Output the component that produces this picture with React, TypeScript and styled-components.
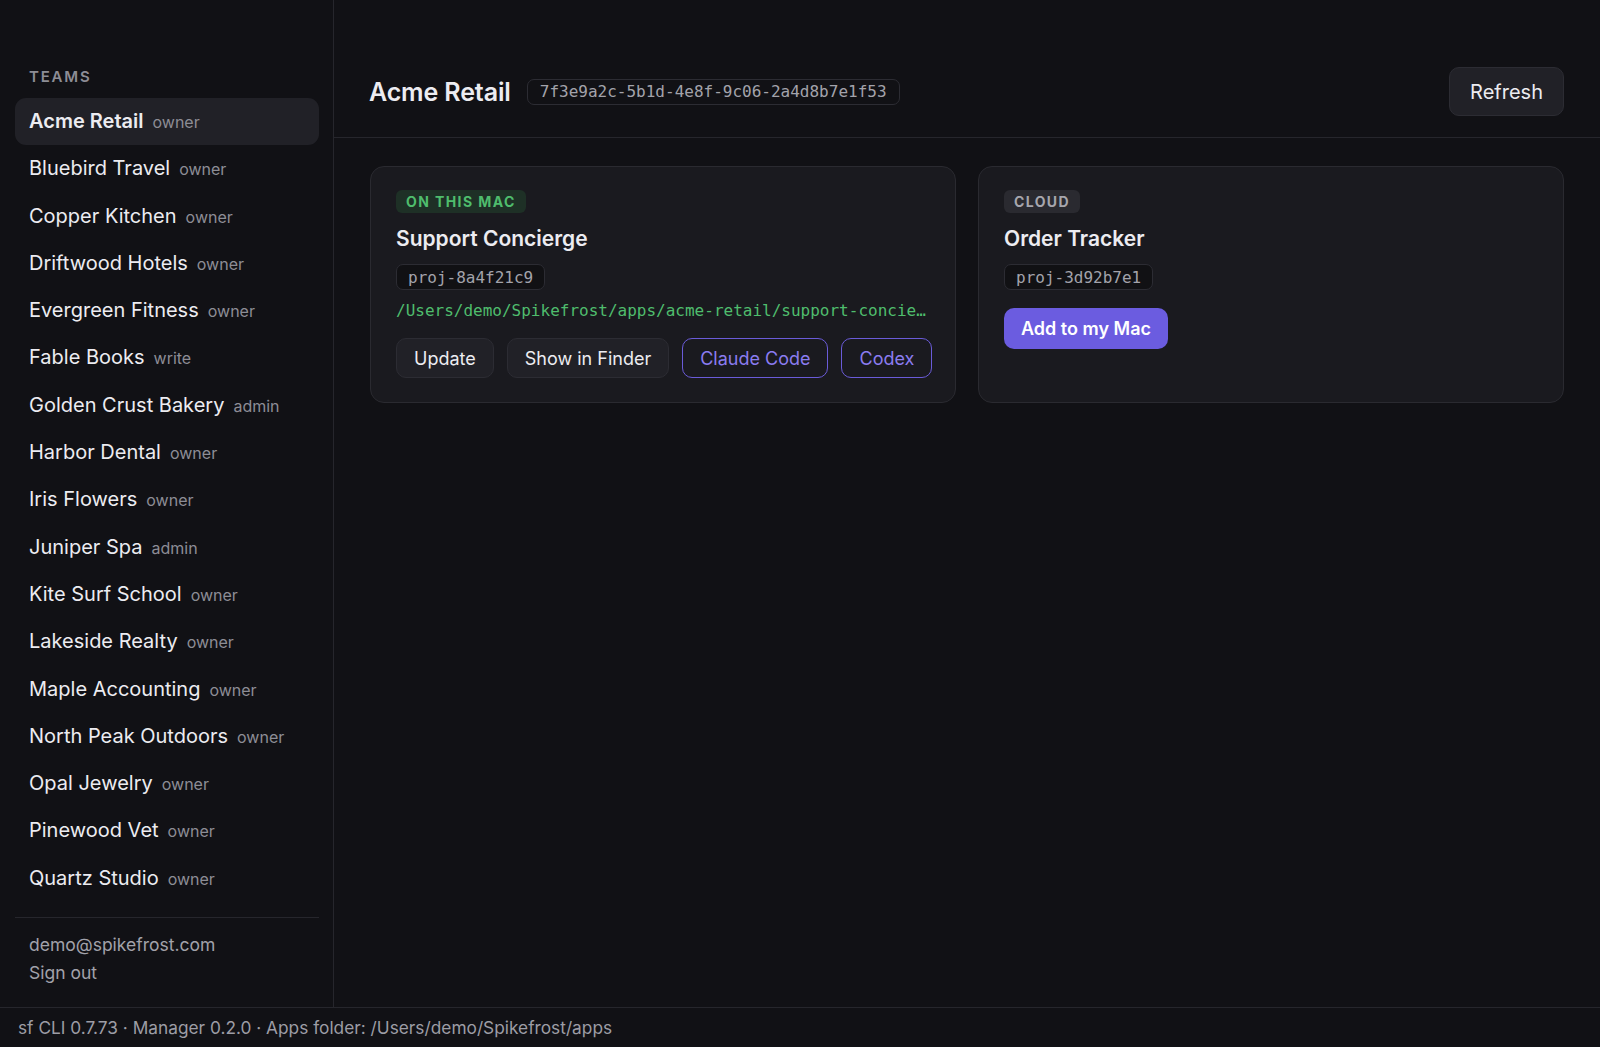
import React from 'react'
import styled, { createGlobalStyle, css } from 'styled-components'

const bg = '#111115'
const line = '#26262c'
const text = '#ececf1'
const muted = '#8d8d95'
const purple = '#6b5ce0'
const green = '#4fbd6d'
const mono = `'DejaVu Sans Mono', 'Liberation Mono', monospace`

const GlobalStyle = createGlobalStyle`
  html, body, #root {
    height: 100%;
    margin: 0;
  }
  body {
    background: ${bg};
    color: ${text};
    font-family: Inter, 'Noto Sans', sans-serif;
    -webkit-font-smoothing: antialiased;
  }
  * {
    box-sizing: border-box;
  }
`

type Team = { name: string; role: string }

const teams: Team[] = [
  { name: 'Acme Retail', role: 'owner' },
  { name: 'Bluebird Travel', role: 'owner' },
  { name: 'Copper Kitchen', role: 'owner' },
  { name: 'Driftwood Hotels', role: 'owner' },
  { name: 'Evergreen Fitness', role: 'owner' },
  { name: 'Fable Books', role: 'write' },
  { name: 'Golden Crust Bakery', role: 'admin' },
  { name: 'Harbor Dental', role: 'owner' },
  { name: 'Iris Flowers', role: 'owner' },
  { name: 'Juniper Spa', role: 'admin' },
  { name: 'Kite Surf School', role: 'owner' },
  { name: 'Lakeside Realty', role: 'owner' },
  { name: 'Maple Accounting', role: 'owner' },
  { name: 'North Peak Outdoors', role: 'owner' },
  { name: 'Opal Jewelry', role: 'owner' },
  { name: 'Pinewood Vet', role: 'owner' },
  { name: 'Quartz Studio', role: 'owner' },
  { name: 'Riverside Cycles', role: 'owner' },
]

export default function App() {
  return (
    <>
      <GlobalStyle />
      <Shell>
        <Body>
          <Sidebar>
            <SectionLabel>Teams</SectionLabel>
            <TeamList>
              {teams.map((t, i) => (
                <TeamItem key={t.name} $active={i === 0}>
                  <TeamName $active={i === 0}>{t.name}</TeamName>
                  <Role>{t.role}</Role>
                </TeamItem>
              ))}
            </TeamList>
            <Account>
              <AccountLine>demo@spikefrost.com</AccountLine>
              <AccountLine>Sign out</AccountLine>
            </Account>
          </Sidebar>

          <Main>
            <Header>
              <TitleRow>
                <Title>Acme Retail</Title>
                <Chip $size="lg">7f3e9a2c-5b1d-4e8f-9c06-2a4d8b7e1f53</Chip>
              </TitleRow>
              <Button $variant="plain" $large>
                Refresh
              </Button>
            </Header>

            <Cards>
              <Card>
                <Badge $kind="local">On this Mac</Badge>
                <CardTitle>Support Concierge</CardTitle>
                <Chip>proj-8a4f21c9</Chip>
                <Path>/Users/demo/Spikefrost/apps/acme-retail/support-concierge</Path>
                <Actions>
                  <Button $variant="plain">Update</Button>
                  <Button $variant="plain">Show in Finder</Button>
                  <Button $variant="outline">Claude Code</Button>
                  <Button $variant="outline">Codex</Button>
                </Actions>
              </Card>
              <Card>
                <Badge $kind="cloud">Cloud</Badge>
                <CardTitle>Order Tracker</CardTitle>
                <Chip>proj-3d92b7e1</Chip>
                <Actions>
                  <Button $variant="primary">Add to my Mac</Button>
                </Actions>
              </Card>
            </Cards>
          </Main>
        </Body>

        <StatusBar>
          sf CLI 0.7.73 · Manager 0.2.0 · Apps folder: /Users/demo/Spikefrost/apps
        </StatusBar>
      </Shell>
    </>
  )
}

const Shell = styled.div`
  height: 100vh;
  display: flex;
  flex-direction: column;
`

const Body = styled.div`
  flex: 1;
  min-height: 0;
  display: flex;
`

const Sidebar = styled.aside`
  width: 334px;
  flex-shrink: 0;
  display: flex;
  flex-direction: column;
  padding: 67px 14px 20px 15px;
  border-right: 1px solid ${line};
`

const SectionLabel = styled.div`
  font-size: 15px;
  line-height: 20px;
  font-weight: 600;
  letter-spacing: 0.12em;
  text-transform: uppercase;
  color: ${muted};
  padding-left: 14px;
  margin-bottom: 11px;
`

const TeamList = styled.div`
  flex: 1;
  min-height: 0;
  overflow: hidden;
`

const TeamItem = styled.div<{ $active?: boolean }>`
  height: 47.3px;
  line-height: 47px;
  padding: 0 14px;
  border-radius: 11px;
  white-space: nowrap;
  ${(p) =>
    p.$active &&
    css`
      background: #212127;
    `}
`

const TeamName = styled.span<{ $active?: boolean }>`
  font-size: 20px;
  font-weight: ${(p) => (p.$active ? 600 : 400)};
  color: ${text};
`

const Role = styled.span`
  font-size: 16px;
  color: ${muted};
  margin-left: 9px;
`

const Account = styled.div`
  border-top: 1px solid ${line};
  padding: 13px 14px 0;
`

const AccountLine = styled.div`
  font-size: 17.5px;
  line-height: 28px;
  color: #a2a2aa;
`

const Main = styled.main`
  flex: 1;
  min-width: 0;
  display: flex;
  flex-direction: column;
`

const Header = styled.header`
  display: flex;
  align-items: center;
  justify-content: space-between;
  padding: 67px 36px 21px 35px;
  border-bottom: 1px solid ${line};
`

const TitleRow = styled.div`
  display: flex;
  align-items: center;
  gap: 16px;
`

const Title = styled.h1`
  margin: 0;
  font-size: 25px;
  line-height: 32px;
  font-weight: 600;
  letter-spacing: -0.005em;
`

const Chip = styled.span<{ $size?: 'lg' }>`
  align-self: flex-start;
  display: inline-flex;
  align-items: center;
  height: 26px;
  padding: 0 ${(p) => (p.$size === 'lg' ? 12 : 11)}px;
  font-family: ${mono};
  font-size: 16px;
  color: #a3a3ab;
  background: ${(p) => (p.$size === 'lg' ? 'transparent' : '#111114')};
  border: 1px solid #2c2c33;
  border-radius: 7px;
  white-space: nowrap;
  ${(p) =>
    p.$size === 'lg' &&
    css`
      align-self: center;
    `}
`

const Cards = styled.div`
  display: grid;
  grid-template-columns: 1fr 1fr;
  gap: 22px;
  padding: 28px 36px 0;
`

const Card = styled.section`
  display: flex;
  flex-direction: column;
  gap: 12px;
  padding: 23px 25px 24px;
  background: #1a1a1f;
  border: 1px solid #2a2a30;
  border-radius: 14px;
  min-width: 0;
`

const Badge = styled.span<{ $kind: 'local' | 'cloud' }>`
  align-self: flex-start;
  display: inline-flex;
  align-items: center;
  height: 23px;
  padding: 0 10px;
  margin-bottom: 1px;
  border-radius: 6px;
  font-size: 14px;
  font-weight: 700;
  letter-spacing: 0.1em;
  text-transform: uppercase;
  ${(p) =>
    p.$kind === 'local'
      ? css`
          background: #1e3026;
          color: ${green};
        `
      : css`
          background: #2a2a30;
          color: #a6a6ad;
        `}
`

const CardTitle = styled.h2`
  margin: 0;
  font-size: 21px;
  line-height: 26px;
  font-weight: 600;
`

const Path = styled.div`
  font-family: ${mono};
  font-size: 16px;
  line-height: 18px;
  color: ${green};
  white-space: nowrap;
  overflow: hidden;
  text-overflow: ellipsis;
`

const Actions = styled.div`
  display: flex;
  gap: 13px;
  margin-top: 6px;
`

const Button = styled.button<{ $variant: 'plain' | 'outline' | 'primary'; $large?: boolean }>`
  flex-shrink: 0;
  white-space: nowrap;
  height: ${(p) => (p.$large ? 49 : p.$variant === 'primary' ? 41 : 40)}px;
  padding: 0 ${(p) => (p.$large ? 20 : 17)}px;
  border-radius: 10px;
  font-family: inherit;
  font-size: ${(p) => (p.$large ? 20 : 18)}px;
  cursor: pointer;
  ${(p) =>
    p.$variant === 'plain' &&
    css`
      background: #212127;
      border: 1px solid #2c2c33;
      color: ${text};
    `}
  ${(p) =>
    p.$variant === 'outline' &&
    css`
      background: transparent;
      border: 1.5px solid #6a5bd8;
      color: #8b7cf0;
    `}
  ${(p) =>
    p.$variant === 'primary' &&
    css`
      background: ${purple};
      border: none;
      color: #fff;
      font-weight: 600;
    `}
`

const StatusBar = styled.footer`
  height: 40px;
  flex-shrink: 0;
  display: flex;
  align-items: center;
  padding: 0 18px;
  border-top: 1px solid ${line};
  font-size: 17.3px;
  color: #9d9da5;
  white-space: nowrap;
`
